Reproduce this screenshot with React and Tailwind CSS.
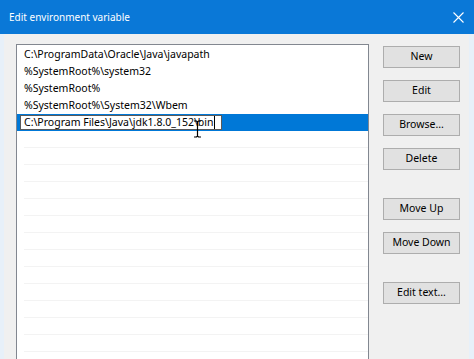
const paths = [
  "C:\\ProgramData\\Oracle\\Java\\javapath",
  "%SystemRoot%\\system32",
  "%SystemRoot%",
  "%SystemRoot%\\System32\\Wbem",
]

const topButtons = ["New", "Edit", "Browse...", "Delete"]

function WinButton({ label, className = "" }) {
  return (
    <button
      className={`flex h-[22px] w-[77px] items-center justify-center border border-[#adadad] bg-[#e1e1e1] text-[10.5px] text-black ${className}`}
    >
      {label}
    </button>
  )
}

function App() {
  const emptyRows = Array.from({ length: 14 })

  return (
    <div className="flex h-[359px] w-[474px] flex-col overflow-hidden whitespace-nowrap bg-[#f0f0f0] font-['Noto_Sans',sans-serif] text-[10.5px]">
      <div className="flex h-[34px] shrink-0 items-center justify-between bg-[#0a78d7] pl-[9px] pr-[9px] text-white">
        <span className="text-[10px] leading-none">Edit environment variable</span>
        <svg width="11" height="11" viewBox="0 0 11 11" className="mr-[1px]">
          <path d="M0.5 0.5 L10.5 10.5 M10.5 0.5 L0.5 10.5" stroke="#ffffff" strokeWidth="1.1" />
        </svg>
      </div>

      <div className="flex flex-1 border-l-[4px] border-r-[5px] border-[#e7f0f9]">
        <div className="ml-[12px] mt-[10px] h-[340px] w-[353px] shrink-0 border border-[#828790] bg-white pt-[1px]">
          {paths.map((p) => (
            <div key={p} className="flex h-[17px] items-center pl-[7px] leading-none text-black">
              {p}
            </div>
          ))}

          <div className="relative flex h-[17px] items-stretch bg-[#0078d7] pl-[3px]">
            <div className="my-[1px] flex w-[202px] items-center border border-[#5a5a5a] bg-white pl-[3px] leading-none text-black">
              <span>C:\Program Files\Java\jdk1.8.0_152\bin</span>
              <span className="ml-[1px] h-[13px] w-[1px] bg-black" />
            </div>
            <svg
              width="9"
              height="18"
              viewBox="0 0 9 18"
              className="absolute left-[176px] top-[6px]"
            >
              <path d="M1 1 H3.5 L4.5 2 L5.5 1 H8 M4.5 2 V16 M1 17 H3.5 L4.5 16 L5.5 17 H8" stroke="#000000" strokeWidth="1.2" fill="none" />
            </svg>
          </div>

          {emptyRows.map((_, i) => (
            <div key={i} className="ml-[7px] h-[17px] border-b border-[#f3f3f3]" />
          ))}
        </div>

        <div className="ml-[14px] mt-[12px] flex flex-col">
          <div className="flex flex-col gap-[12px]">
            {topButtons.map((b) => (
              <WinButton key={b} label={b} />
            ))}
          </div>
          <WinButton label="Move Up" className="mt-[28px]" />
          <WinButton label="Move Down" className="mt-[12px]" />
          <WinButton label="Edit text..." className="mt-[28px]" />
        </div>
      </div>
    </div>
  )
}

export default App
